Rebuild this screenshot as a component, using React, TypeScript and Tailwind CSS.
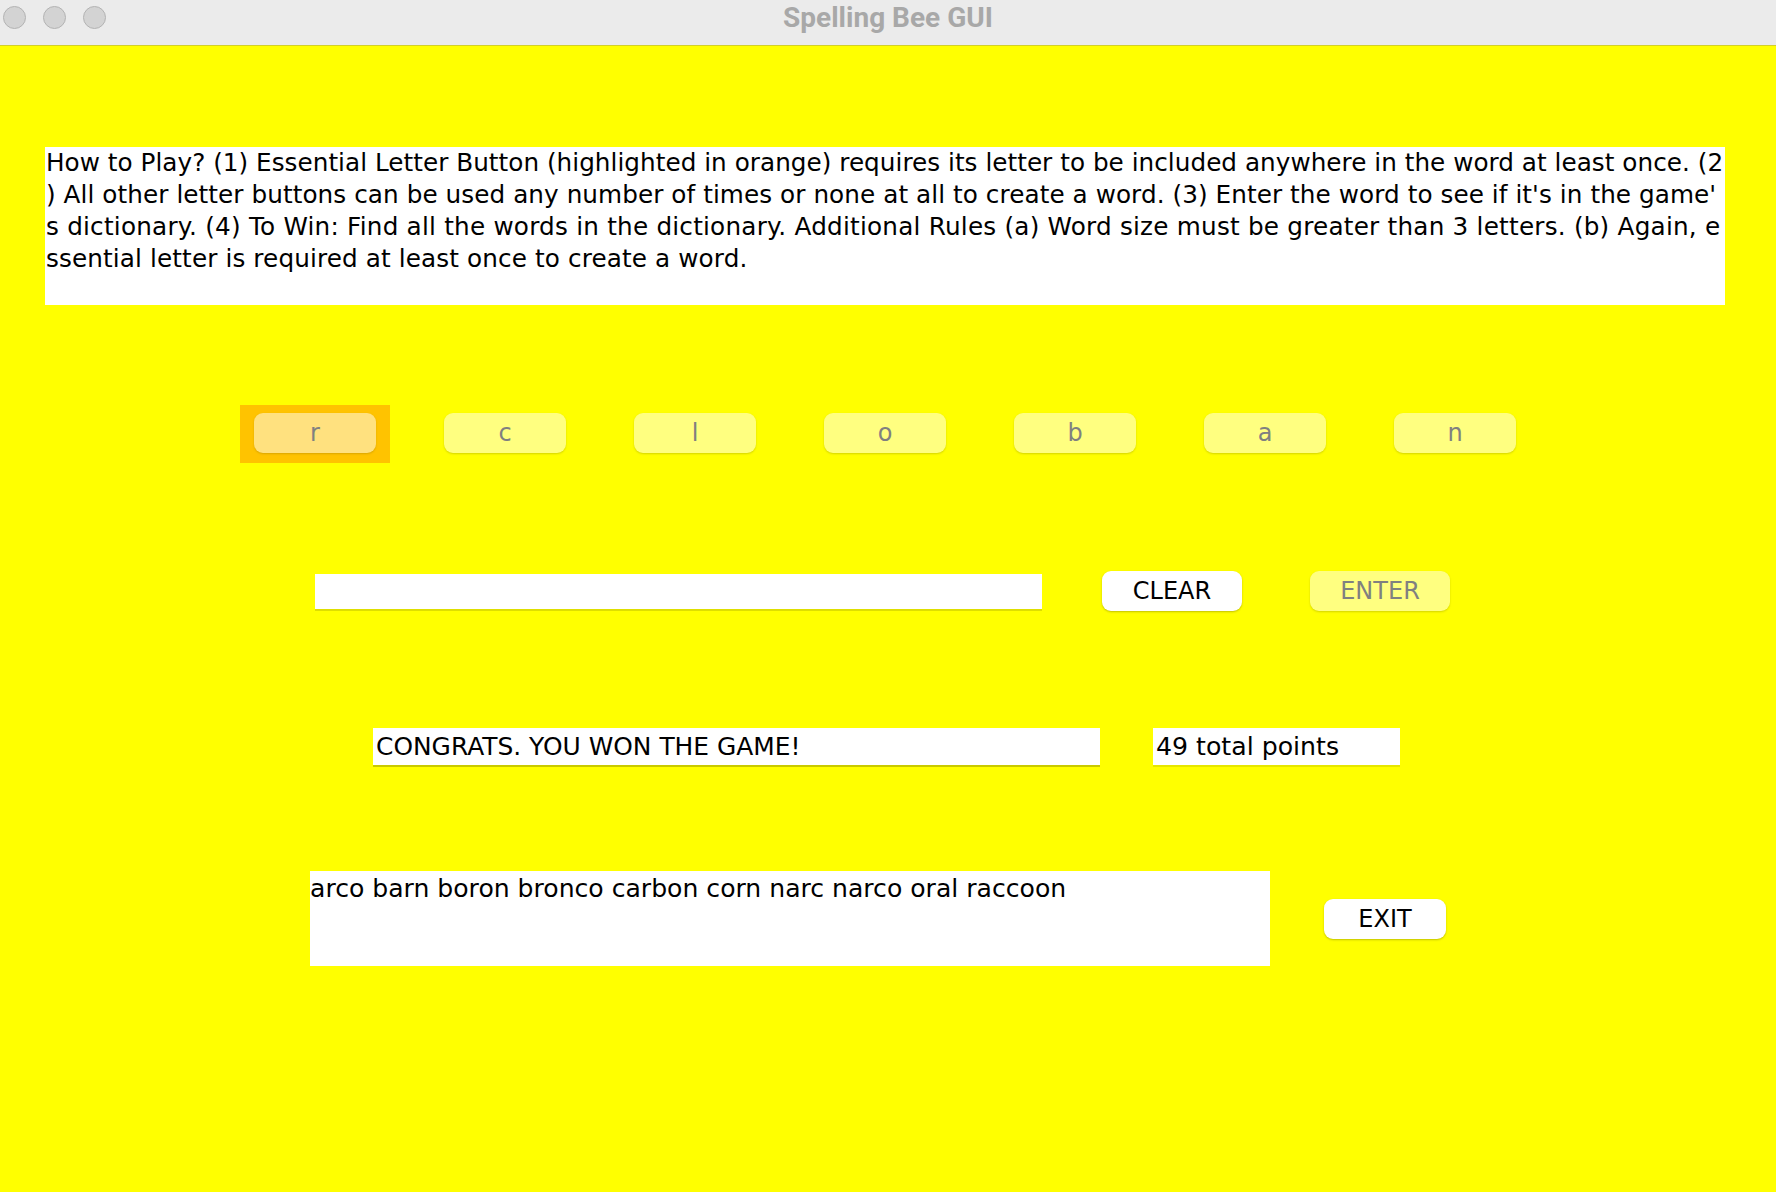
import React from "react";

const lines: { t: string; cls: string }[] = [
  {
    t: "How to Play? (1) Essential Letter Button (highlighted in orange) requires its letter to be included anywhere in the word at least once. (2",
    cls: "whitespace-pre tracking-[0.03px]",
  },
  {
    t: ") All other letter buttons can be used any number of times or none at all to create a word. (3) Enter the word to see if it's in the game'",
    cls: "whitespace-pre tracking-[0.07px]",
  },
  {
    t: "s dictionary. (4) To Win: Find all the words in the dictionary. Additional Rules (a) Word size must be greater than 3 letters. (b) Again, e",
    cls: "whitespace-pre tracking-[0.22px]",
  },
  {
    t: "ssential letter is required at least once to create a word.",
    cls: "whitespace-pre tracking-[0.12px]",
  },
];

const others = ["c", "l", "o", "b", "a", "n"];

export default function App() {
  const font = { fontFamily: '"DejaVu Sans", "Liberation Sans", sans-serif' };
  return (
    <div className="w-[1776px] h-[1192px] bg-[#ffff00] flex flex-col overflow-hidden" style={font}>
      {/* Title bar */}
      <div className="h-[46px] shrink-0 bg-[#ebebeb] border-b border-[#d2cf2a] flex items-start relative">
        <div className="flex items-center gap-[17px] pl-[3px] pt-[6px]">
          <div className="w-[23px] h-[23px] rounded-full bg-[#d3d3d3] border border-[#b3b3b3]" />
          <div className="w-[23px] h-[23px] rounded-full bg-[#d3d3d3] border border-[#b3b3b3]" />
          <div className="w-[23px] h-[23px] rounded-full bg-[#d3d3d3] border border-[#b3b3b3]" />
        </div>
        <div
          className="absolute left-0 right-0 top-0 h-[35px] flex items-center justify-center text-[28px] font-bold text-[#a8a8a8]"
          style={{ fontFamily: 'Roboto, "Liberation Sans", sans-serif' }}
        >
          Spelling Bee GUI
        </div>
      </div>

      {/* Instructions */}
      <div className="mt-[101px] ml-[45px] w-[1680px] h-[158px] bg-white pl-[1px] text-black text-[24.7px] leading-[32px]">
        {lines.map((l, i) => (
          <div key={i} className={l.cls}>
            {l.t}
          </div>
        ))}
      </div>

      {/* Letter row */}
      <div className="mt-[100px] ml-[240px] flex items-start">
        <div className="w-[150px] h-[58px] bg-[#ffc300] pt-[8px] pl-[14px]">
          <div className="w-[122px] h-[40px] rounded-[9px] bg-[#ffe17f] shadow-[0_1px_2px_rgba(150,110,0,0.35)] flex items-center justify-center text-[24px] text-[#808080]">
            r
          </div>
        </div>
        <div className="ml-[54px] pt-[8px] flex gap-[68px]">
          {others.map((c) => (
            <div
              key={c}
              className="w-[122px] h-[40px] rounded-[9px] bg-[#ffff80] shadow-[0_1px_2px_rgba(150,150,0,0.4)] flex items-center justify-center text-[24px] text-[#808080]"
            >
              {c}
            </div>
          ))}
        </div>
      </div>

      {/* Input row */}
      <div className="mt-[108px] ml-[315px] flex items-center">
        <div className="w-[727px] h-[35px] bg-white shadow-[0_2px_0_#dede00]" />
        <div className="ml-[60px] w-[140px] h-[40px] rounded-[9px] bg-white shadow-[0_1px_2px_rgba(120,120,0,0.45)] flex items-center justify-center text-[24px] text-black">
          CLEAR
        </div>
        <div className="ml-[68px] w-[140px] h-[40px] rounded-[9px] bg-[#ffff80] shadow-[0_1px_2px_rgba(150,150,0,0.4)] flex items-center justify-center text-[24px] text-[#808080]">
          ENTER
        </div>
      </div>

      {/* Congrats row */}
      <div className="mt-[117px] ml-[373px] flex items-center">
        <div className="w-[727px] h-[37px] bg-white shadow-[0_2px_0_#c9c900] pl-[3px] flex items-center text-[24.9px] text-black">
          CONGRATS. YOU WON THE GAME!
        </div>
        <div className="ml-[53px] w-[247px] h-[37px] bg-white shadow-[0_2px_0_#e6e600] pl-[3px] flex items-center text-[25.2px] text-black">
          49 total points
        </div>
      </div>

      {/* Word list row */}
      <div className="mt-[106px] ml-[310px] flex items-center">
        <div className="w-[960px] h-[95px] bg-white text-[25.1px] leading-[33px] pt-[1px] text-black">
          arco barn boron bronco carbon corn narc narco oral raccoon
        </div>
        <div className="ml-[54px] w-[122px] h-[40px] rounded-[9px] bg-white shadow-[0_1px_2px_rgba(120,120,0,0.45)] flex items-center justify-center text-[24px] text-black">
          EXIT
        </div>
      </div>
    </div>
  );
}
